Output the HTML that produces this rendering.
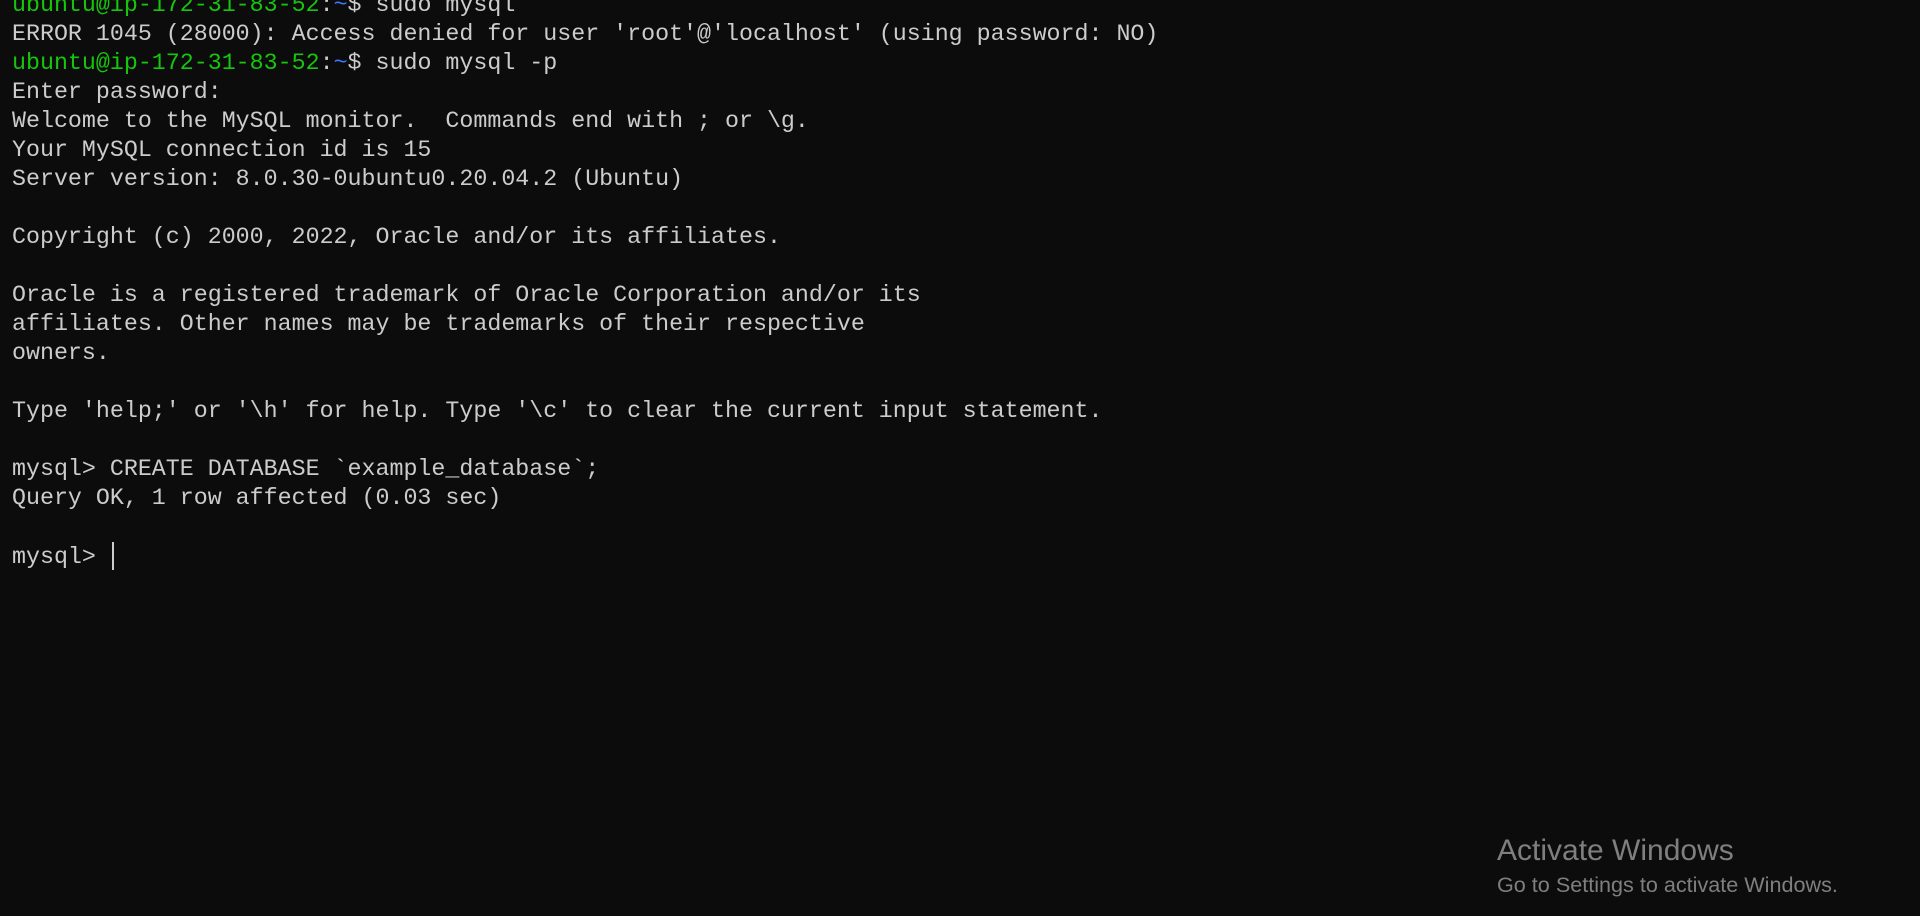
<!DOCTYPE html>
<html><head><meta charset="utf-8"><style>
html,body{margin:0;padding:0;width:1920px;height:916px;background:#0c0c0c;overflow:hidden}
pre{position:absolute;left:12px;top:-9px;margin:0;font-family:"Liberation Mono",monospace;font-size:23.3px;line-height:29px;color:#cccccc;white-space:pre}
.g{color:#16c60c}
.b{color:#3b78ff}
.cur{display:inline-block;width:2px;height:28px;background:#cccccc;vertical-align:-7px;margin-left:2px}
.aw{position:absolute;left:1497px;top:834px;font-family:"Liberation Sans",sans-serif;color:#7f7f7f}
.aw1{font-size:30px;line-height:34px}
.aw2{font-size:21.6px;line-height:28px;margin-top:3px}
</style></head><body>
<pre><span class="g">ubuntu@ip-172-31-83-52</span>:<span class="b">~</span>$ sudo mysql
ERROR 1045 (28000): Access denied for user 'root'@'localhost' (using password: NO)
<span class="g">ubuntu@ip-172-31-83-52</span>:<span class="b">~</span>$ sudo mysql -p
Enter password:
Welcome to the MySQL monitor.  Commands end with ; or \g.
Your MySQL connection id is 15
Server version: 8.0.30-0ubuntu0.20.04.2 (Ubuntu)

Copyright (c) 2000, 2022, Oracle and/or its affiliates.

Oracle is a registered trademark of Oracle Corporation and/or its
affiliates. Other names may be trademarks of their respective
owners.

Type 'help;' or '\h' for help. Type '\c' to clear the current input statement.

mysql&gt; CREATE DATABASE `example_database`;
Query OK, 1 row affected (0.03 sec)

mysql&gt; <span class="cur"></span></pre>
<div class="aw"><div class="aw1">Activate Windows</div><div class="aw2">Go to Settings to activate Windows.</div></div>
</body></html>
